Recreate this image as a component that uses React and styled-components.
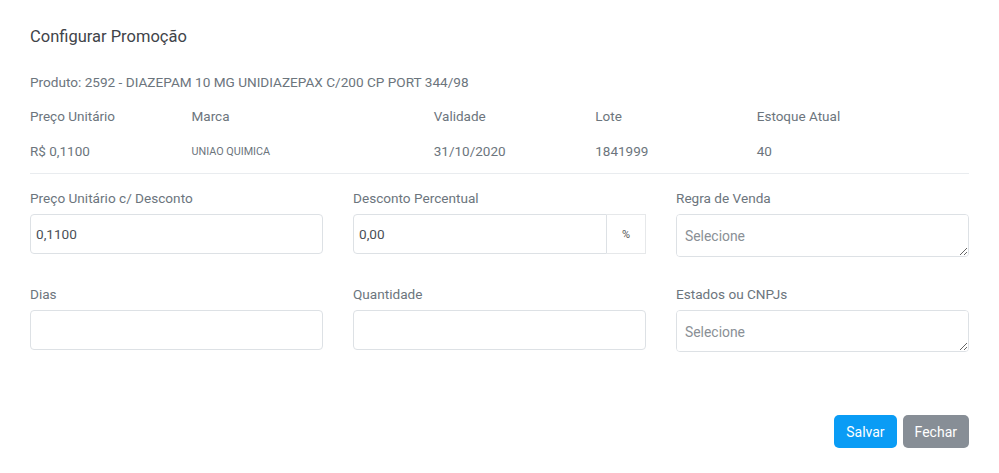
import styled, { createGlobalStyle } from "styled-components";

const GlobalStyle = createGlobalStyle`
  body {
    margin: 0;
    background: #fff;
    font-family: Roboto, "Liberation Sans", Arial, sans-serif;
  }
`;

const Modal = styled.div`
  width: 999px;
  height: 473px;
  box-sizing: border-box;
  padding: 27px 30px 0 30px;
  color: #6c757d;
`;

const Title = styled.h5`
  margin: 0;
  font-size: 16.5px;
  line-height: 20px;
  font-weight: 400;
  color: #3f4449;
`;

const Product = styled.div`
  margin-top: 26px;
  font-size: 13.6px;
  line-height: 18px;
`;

const InfoGrid = styled.div`
  display: grid;
  grid-template-columns: 161.5px 242.25px 161.5px 161.5px 161.5px;
  grid-auto-rows: 18px;
  margin-top: 16px;
  row-gap: 17px;
  line-height: 18px;
`;

const InfoCell = styled.div`
  font-size: ${(p) => (p.small ? "10.8px" : "13.5px")};
  ${(p) => p.small && "line-height: 16px; margin-top: 2px;"}
`;

const Divider = styled.hr`
  margin: 13px 0 0 0;
  border: 0;
  border-top: 1px solid #e9ecef;
`;

const FormGrid = styled.div`
  display: grid;
  grid-template-columns: 293px 293px 293px;
  column-gap: 30px;
  row-gap: 28px;
  margin-top: 15px;
  align-items: start;
`;

const Field = styled.div`
  display: flex;
  flex-direction: column;
  gap: 7px;
`;

const Label = styled.label`
  font-size: 13.6px;
  line-height: 18px;
`;

const Input = styled.input`
  box-sizing: border-box;
  width: 100%;
  height: 40px;
  padding: 0 5px;
  border: 1px solid #dde1e5;
  border-radius: 4px;
  font-family: inherit;
  font-size: 13.6px;
  color: #4a5057;
  outline: none;
  background: #fff;
`;

const Group = styled.div`
  display: flex;
  height: 40px;
  ${Input} {
    flex: 1;
    border-top-right-radius: 0;
    border-bottom-right-radius: 0;
  }
`;

const Addon = styled.span`
  width: 38px;
  display: flex;
  align-items: center;
  justify-content: center;
  border: 1px solid #e6e8ea;
  border-left: 0;
  font-size: 11px;
  color: #555;
`;

const Select = styled.textarea`
  box-sizing: border-box;
  width: 100%;
  height: ${(p) => p.h}px;
  padding: 12px 8px;
  border: 1px solid #dde1e5;
  border-radius: 4px;
  font-family: inherit;
  font-size: 13.9px;
  line-height: 18px;
  outline: none;
  resize: vertical;
  &::placeholder {
    color: #8a9096;
  }
`;

const Footer = styled.div`
  display: flex;
  justify-content: flex-end;
  gap: 6px;
  margin-top: 63px;
`;

const Button = styled.button`
  height: 33px;
  padding: 0 12px;
  border: 0;
  border-radius: 5px;
  font-family: inherit;
  font-size: 14px;
  color: #fff;
  background: ${(p) => (p.primary ? "#0a9cf5" : "#878e96")};
`;

export default function App() {
  return (
    <>
      <GlobalStyle />
      <Modal>
        <Title>Configurar Promoção</Title>
        <Product>Produto: 2592 - DIAZEPAM 10 MG UNIDIAZEPAX C/200 CP PORT 344/98</Product>
        <InfoGrid>
          <InfoCell>Preço Unitário</InfoCell>
          <InfoCell>Marca</InfoCell>
          <InfoCell>Validade</InfoCell>
          <InfoCell>Lote</InfoCell>
          <InfoCell>Estoque Atual</InfoCell>
          <InfoCell>R$ 0,1100</InfoCell>
          <InfoCell small>UNIAO QUIMICA</InfoCell>
          <InfoCell>31/10/2020</InfoCell>
          <InfoCell>1841999</InfoCell>
          <InfoCell>40</InfoCell>
        </InfoGrid>
        <Divider />
        <FormGrid>
          <Field>
            <Label>Preço Unitário c/ Desconto</Label>
            <Input defaultValue="0,1100" />
          </Field>
          <Field>
            <Label>Desconto Percentual</Label>
            <Group>
              <Input defaultValue="0,00" />
              <Addon>%</Addon>
            </Group>
          </Field>
          <Field>
            <Label>Regra de Venda</Label>
            <Select h={43} placeholder="Selecione" readOnly />
          </Field>
          <Field>
            <Label>Dias</Label>
            <Input />
          </Field>
          <Field>
            <Label>Quantidade</Label>
            <Input />
          </Field>
          <Field>
            <Label>Estados ou CNPJs</Label>
            <Select h={42} placeholder="Selecione" readOnly />
          </Field>
        </FormGrid>
        <Footer>
          <Button primary>Salvar</Button>
          <Button>Fechar</Button>
        </Footer>
      </Modal>
    </>
  );
}
